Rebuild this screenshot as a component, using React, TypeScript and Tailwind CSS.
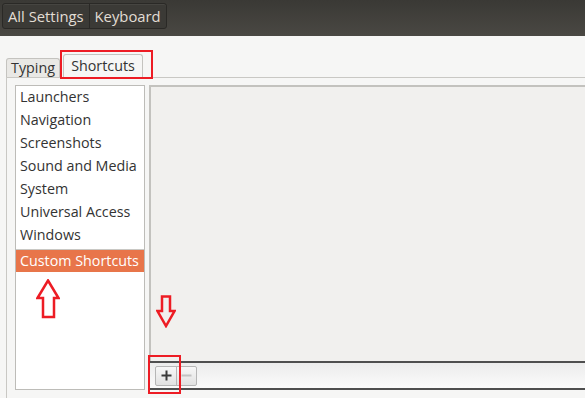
import React from "react";

const categories = [
  "Launchers",
  "Navigation",
  "Screenshots",
  "Sound and Media",
  "System",
  "Universal Access",
  "Windows",
  "Custom Shortcuts",
];

function UpArrow() {
  return (
    <svg width="24" height="40" viewBox="0 0 24 40" className="block">
      <path
        d="M12 1.5 L22.5 19 L18 19 L18 38 L7 38 L7 19 L1.5 19 Z"
        fill="none"
        stroke="#ed1c24"
        strokeWidth="2.5"
        strokeLinejoin="miter"
      />
    </svg>
  );
}

function DownArrow() {
  return (
    <svg width="20" height="33" viewBox="0 0 20 33" className="block">
      <path
        d="M6 1.5 L14 1.5 L14 16 L18.5 16 L10 31 L1.5 16 L6 16 Z"
        fill="none"
        stroke="#ed1c24"
        strokeWidth="2.5"
      />
    </svg>
  );
}

export default function App() {
  const selected = "Custom Shortcuts";

  return (
    <div
      className="w-[585px] h-[398px] overflow-hidden bg-[#f2f1f0] text-[#333333] text-[14.3px] leading-none"
      style={{ fontFamily: '"Open Sans", "Noto Sans", sans-serif' }}
    >
      {/* header bar */}
      <div className="h-[36px] bg-gradient-to-b from-[#3a3935] to-[#4a4843] flex items-start pt-[3px] pl-[2px]">
        <div className="flex rounded-[3px] border border-[#2a2926] bg-[#3b3a36] shadow-[inset_0_1px_0_rgba(255,255,255,0.06)]">
          <div className="h-[24px] px-[5px] flex items-center text-[#e2ddd4] border-r border-[#2a2926] text-[14.8px]">
            All Settings
          </div>
          <div className="h-[24px] px-[5px] flex items-center text-[#e2ddd4] text-[14.8px]">
            Keyboard
          </div>
        </div>
      </div>

      {/* body */}
      <div className="pl-[6px] pt-[18px] bg-[#f6f6f5] h-[362px]">
        {/* tabs */}
        <div className="flex items-end h-[23px]">
          <div className="h-[19px] w-[54px] flex items-center justify-center border border-b-0 border-[#c4c3bf] rounded-t-[3px] bg-[#e9e8e5]">
            Typing
          </div>
          <div className="relative ml-[3px] h-[23px] w-[80px] flex items-center justify-center border border-b-0 border-[#c4c3bf] rounded-t-[3px] bg-[#f6f6f5]">
            Shortcuts
            <div className="absolute left-[-4px] top-[-5px] w-[93px] h-[29px] border-[2.5px] border-[#ed1c24]" />
          </div>
        </div>

        {/* notebook page */}
        <div className="flex h-[321px] border-l border-t border-[#c9c8c4] pl-[8px] pt-[7px] gap-[4px]">
          {/* category list */}
          <div className="w-[130px] h-[305px] bg-white border border-[#bdbcb8] flex flex-col">
            {categories.map((c) => (
              <div
                key={c}
                className={
                  c === selected
                    ? "h-[23px] mt-[2px] flex items-center pl-[4px] bg-[#e8754a] text-white border-t border-[#c9c8c4]"
                    : "h-[23px] flex items-center pl-[4px]"
                }
              >
                {c}
              </div>
            ))}
            <div className="pl-[20px] pt-[7px]">
              <UpArrow />
            </div>
          </div>

          {/* shortcut panel */}
          <div className="flex-1 flex flex-col h-[305px]">
            <div className="flex-1 bg-[#f1f0ee] border-l-2 border-t-2 border-[#c3c2be] pl-[5px] pt-[208px]">
              <DownArrow />
            </div>
            <div className="relative h-[29px] border-t-2 border-b-2 border-[#4f4f4f] bg-gradient-to-b from-[#ececec] to-[#fbfbfb] flex items-center pl-[6px]">
              <div className="flex rounded-[2px] border border-[#b6b6b6] bg-gradient-to-b from-[#f7f7f7] to-[#e2e2e2]">
                <div className="w-[21px] h-[18px] flex items-center justify-center border-r border-[#b6b6b6]">
                  <svg width="11" height="11" viewBox="0 0 11 11">
                    <path d="M5.5 0.5 V10.5 M0.5 5.5 H10.5" stroke="#3a3a3a" strokeWidth="2" />
                  </svg>
                </div>
                <div className="w-[19px] h-[18px] flex items-center justify-center">
                  <svg width="11" height="11" viewBox="0 0 11 11">
                    <path d="M0.5 5.5 H10.5" stroke="#c3c3c3" strokeWidth="2" />
                  </svg>
                </div>
              </div>
              <div className="absolute left-[-1px] top-[-8px] w-[33px] h-[39px] border-[2.5px] border-[#ed1c24]" />
            </div>
          </div>
        </div>
      </div>
    </div>
  );
}
